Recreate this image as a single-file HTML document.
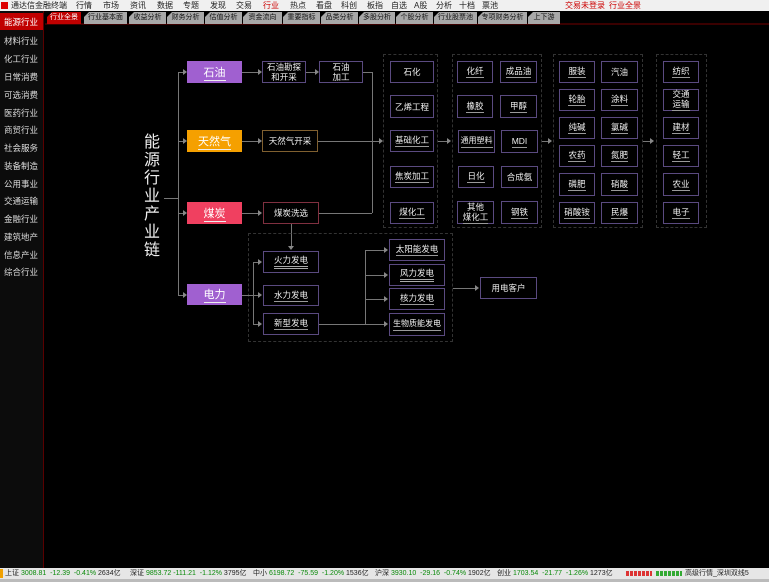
<!DOCTYPE html>
<html><head><meta charset="utf-8"><style>
*{margin:0;padding:0;box-sizing:border-box}
body{width:769px;height:582px;background:#000;position:relative;overflow:hidden;font-family:"Liberation Sans","Noto Sans CJK SC",sans-serif;font-size:9px;color:#ddd}
.a{position:absolute}
.top{left:0;top:0;width:769px;height:11px;background:#f0f0f0;color:#222;font-size:8px;line-height:11px}
.top span{position:absolute;top:0}
.tabs{left:45px;top:11px;width:724px;height:14px;background:#000;border-bottom:2px solid #3a0000}
.tab{position:absolute;top:1px;height:12px;background:#a8a8a8;color:#111;font-size:7px;line-height:12px;text-align:center;white-space:nowrap;overflow:hidden;clip-path:polygon(5px 0,100% 0,100% 100%,0 100%,0 5px)}
.side{left:0;top:11px;width:44px;height:557px;background:#0c0c0c;border-right:1px solid #5a0000}
.si{position:absolute;left:4px;font-size:8.5px;color:#ddd}
.b{position:absolute;border:1px solid #5a4a80;color:#eee;font-size:8.5px;display:flex;align-items:center;justify-content:center;text-align:center;line-height:10px;white-space:nowrap}
.b u{text-decoration:none;border-bottom:1px solid #999;padding-bottom:1px}
.c{position:absolute;color:#fff;font-size:11px;display:flex;align-items:center;justify-content:center}
.c u{text-decoration:none;border-bottom:1px solid #eee}
.g{position:absolute;border:1px dashed #333}
.l{position:absolute;background:#777}
.ar{position:absolute;width:0;height:0;border-top:3px solid transparent;border-bottom:3px solid transparent;border-left:4px solid #888}
.ad{position:absolute;width:0;height:0;border-left:3px solid transparent;border-right:3px solid transparent;border-top:4px solid #888}
.st{left:0;top:568px;width:769px;height:11px;background:#e6e6e6;color:#222;font-size:7px;line-height:11px;white-space:nowrap}
.st span{position:absolute;top:0}
.gr{color:#0a8a0a}
</style></head><body>
<div class="a top">
<span style="left:1px;top:2px;width:7px;height:7px;background:#d00"></span>
<span style="left:11px">通达信金融终端</span>
<span style="left:76px">行情</span><span style="left:103px">市场</span><span style="left:130px">资讯</span><span style="left:157px">数据</span><span style="left:183px">专题</span><span style="left:210px">发现</span><span style="left:236px">交易</span><span style="left:263px;color:#c00">行业</span><span style="left:290px">热点</span><span style="left:316px">看盘</span><span style="left:341px">科创</span><span style="left:367px">板指</span><span style="left:391px">自选</span><span style="left:414px">A股</span><span style="left:436px">分析</span><span style="left:459px">十档</span><span style="left:482px">票池</span>
<span style="left:565px;color:#c00">交易未登录</span><span style="left:609px;color:#c00">行业全景</span>
</div>
<div class="a tabs">
<div class="tab" style="left:2px;width:34px;background:#c00000;color:#fff">行业全景</div>
<div class="tab" style="left:39px;width:43px">行业基本面</div>
<div class="tab" style="left:84px;width:37px">收益分析</div>
<div class="tab" style="left:122px;width:37px">财务分析</div>
<div class="tab" style="left:160px;width:37px">估值分析</div>
<div class="tab" style="left:198px;width:39px">资金流向</div>
<div class="tab" style="left:238px;width:37px">重要指标</div>
<div class="tab" style="left:276px;width:37px">品类分析</div>
<div class="tab" style="left:314px;width:36px">多股分析</div>
<div class="tab" style="left:351px;width:37px">个股分析</div>
<div class="tab" style="left:389px;width:43px">行业股票池</div>
<div class="tab" style="left:433px;width:49px">专项财务分析</div>
<div class="tab" style="left:483px;width:32px">上下游</div>
</div>
<div class="a side">
<div style="position:absolute;left:0;top:2px;width:43px;height:17px;background:#c00000"></div>
<div class="si" style="top:5px;color:#fff">能源行业</div>
<div class="si" style="top:24px">材料行业</div><div class="si" style="top:42px">化工行业</div><div class="si" style="top:60px">日常消费</div><div class="si" style="top:78px">可选消费</div><div class="si" style="top:96px">医药行业</div><div class="si" style="top:113px">商贸行业</div><div class="si" style="top:131px">社会服务</div><div class="si" style="top:149px">装备制造</div><div class="si" style="top:167px">公用事业</div><div class="si" style="top:184px">交通运输</div><div class="si" style="top:202px">金融行业</div><div class="si" style="top:220px">建筑地产</div><div class="si" style="top:238px">信息产业</div><div class="si" style="top:255px">综合行业</div>
</div>

<div class="a" style="left:144px;top:134px;width:18px;font-size:16px;line-height:18px;color:#eee">能源行业产业链</div>
<div class="l" style="left:164px;top:198px;width:14px;height:1px"></div>
<div class="l" style="left:178px;top:72px;width:1px;height:223px"></div>
<div class="l" style="left:178px;top:72px;width:6px;height:1px"></div><div class="ar" style="left:183px;top:69px"></div>
<div class="l" style="left:178px;top:141px;width:6px;height:1px"></div><div class="ar" style="left:183px;top:138px"></div>
<div class="l" style="left:178px;top:213px;width:6px;height:1px"></div><div class="ar" style="left:183px;top:210px"></div>
<div class="l" style="left:178px;top:295px;width:6px;height:1px"></div><div class="ar" style="left:183px;top:292px"></div>

<div class="c" style="left:187px;top:61px;width:55px;height:22px;background:#a060d0"><u>石油</u></div>
<div class="c" style="left:187px;top:130px;width:55px;height:22px;background:#f5a000"><u>天然气</u></div>
<div class="c" style="left:187px;top:202px;width:55px;height:22px;background:#f04060"><u>煤炭</u></div>
<div class="c" style="left:187px;top:284px;width:55px;height:21px;background:#a060d0"><u>电力</u></div>

<div class="l" style="left:242px;top:72px;width:16px;height:1px"></div><div class="ar" style="left:258px;top:69px"></div>
<div class="l" style="left:242px;top:141px;width:16px;height:1px"></div><div class="ar" style="left:258px;top:138px"></div>
<div class="l" style="left:242px;top:213px;width:16px;height:1px"></div><div class="ar" style="left:258px;top:210px"></div>
<div class="b" style="left:262px;top:61px;width:44px;height:22px">石油勘探<br>和开采</div>
<div class="l" style="left:306px;top:72px;width:9px;height:1px"></div><div class="ar" style="left:315px;top:69px"></div>
<div class="b" style="left:319px;top:61px;width:44px;height:22px">石油<br>加工</div>
<div class="b" style="left:262px;top:130px;width:56px;height:22px;border-color:#806030">天然气开采</div>
<div class="b" style="left:263px;top:202px;width:56px;height:22px;border-color:#803040">煤炭洗选</div>
<div class="l" style="left:363px;top:72px;width:9px;height:1px"></div>
<div class="l" style="left:372px;top:72px;width:1px;height:141px"></div>
<div class="l" style="left:319px;top:213px;width:53px;height:1px"></div>
<div class="l" style="left:318px;top:141px;width:61px;height:1px"></div><div class="ar" style="left:379px;top:138px"></div>

<div class="g" style="left:383px;top:54px;width:55px;height:174px"></div>
<div class="b" style="left:390px;top:61px;width:44px;height:22px">石化</div>
<div class="b" style="left:390px;top:95px;width:44px;height:23px">乙烯工程</div>
<div class="b" style="left:390px;top:130px;width:44px;height:22px"><u>基础化工</u></div>
<div class="b" style="left:390px;top:166px;width:44px;height:22px"><u>焦炭加工</u></div>
<div class="b" style="left:390px;top:202px;width:44px;height:22px"><u>煤化工</u></div>
<div class="l" style="left:438px;top:141px;width:10px;height:1px"></div><div class="ar" style="left:447px;top:138px"></div>

<div class="g" style="left:452px;top:54px;width:90px;height:174px"></div>
<div class="b" style="left:457px;top:61px;width:36px;height:22px"><u>化纤</u></div>
<div class="b" style="left:500px;top:61px;width:37px;height:22px"><u>成品油</u></div>
<div class="b" style="left:457px;top:95px;width:36px;height:23px"><u>橡胶</u></div>
<div class="b" style="left:500px;top:95px;width:37px;height:23px"><u>甲醇</u></div>
<div class="b" style="left:458px;top:130px;width:37px;height:23px;font-size:8px"><u>通用塑料</u></div>
<div class="b" style="left:501px;top:130px;width:37px;height:23px"><u>MDI</u></div>
<div class="b" style="left:458px;top:166px;width:36px;height:22px"><u>日化</u></div>
<div class="b" style="left:501px;top:166px;width:37px;height:22px">合成氨</div>
<div class="b" style="left:457px;top:201px;width:37px;height:23px"><u>其他<br>煤化工</u></div>
<div class="b" style="left:501px;top:201px;width:37px;height:23px"><u>钢铁</u></div>
<div class="l" style="left:542px;top:141px;width:7px;height:1px"></div><div class="ar" style="left:548px;top:138px"></div>

<div class="g" style="left:553px;top:54px;width:90px;height:174px"></div>
<div class="b" style="left:559px;top:61px;width:36px;height:22px"><u>服装</u></div>
<div class="b" style="left:601px;top:61px;width:37px;height:22px">汽油</div>
<div class="b" style="left:559px;top:89px;width:36px;height:22px"><u>轮胎</u></div>
<div class="b" style="left:601px;top:89px;width:37px;height:22px"><u>涂料</u></div>
<div class="b" style="left:559px;top:117px;width:36px;height:22px"><u>纯碱</u></div>
<div class="b" style="left:601px;top:117px;width:37px;height:22px"><u>氯碱</u></div>
<div class="b" style="left:559px;top:145px;width:36px;height:22px"><u>农药</u></div>
<div class="b" style="left:601px;top:145px;width:37px;height:22px"><u>氮肥</u></div>
<div class="b" style="left:559px;top:173px;width:36px;height:23px"><u>磷肥</u></div>
<div class="b" style="left:601px;top:173px;width:37px;height:23px"><u>硝酸</u></div>
<div class="b" style="left:559px;top:202px;width:36px;height:22px"><u>硝酸铵</u></div>
<div class="b" style="left:601px;top:202px;width:37px;height:22px"><u>民爆</u></div>
<div class="l" style="left:643px;top:141px;width:8px;height:1px"></div><div class="ar" style="left:650px;top:138px"></div>

<div class="g" style="left:656px;top:54px;width:51px;height:174px"></div>
<div class="b" style="left:663px;top:61px;width:36px;height:22px"><u>纺织</u></div>
<div class="b" style="left:663px;top:89px;width:36px;height:22px"><u>交通<br>运输</u></div>
<div class="b" style="left:663px;top:117px;width:36px;height:22px"><u>建材</u></div>
<div class="b" style="left:663px;top:145px;width:36px;height:22px"><u>轻工</u></div>
<div class="b" style="left:663px;top:173px;width:36px;height:23px"><u>农业</u></div>
<div class="b" style="left:663px;top:202px;width:36px;height:22px"><u>电子</u></div>

<div class="l" style="left:291px;top:224px;width:1px;height:23px"></div><div class="ad" style="left:288px;top:246px"></div>
<div class="g" style="left:248px;top:233px;width:205px;height:109px"></div>
<div class="l" style="left:242px;top:295px;width:16px;height:1px"></div><div class="ar" style="left:258px;top:292px"></div>
<div class="l" style="left:253px;top:262px;width:1px;height:62px"></div>
<div class="l" style="left:253px;top:262px;width:5px;height:1px"></div><div class="ar" style="left:258px;top:259px"></div>
<div class="l" style="left:253px;top:324px;width:5px;height:1px"></div><div class="ar" style="left:258px;top:321px"></div>
<div class="b" style="left:263px;top:251px;width:56px;height:22px"><u style="border-bottom:3px double #aaa">火力发电</u></div>
<div class="b" style="left:263px;top:285px;width:56px;height:21px"><u>水力发电</u></div>
<div class="b" style="left:263px;top:313px;width:56px;height:22px"><u>新型发电</u></div>
<div class="l" style="left:319px;top:324px;width:47px;height:1px"></div>
<div class="l" style="left:365px;top:250px;width:1px;height:75px"></div>
<div class="l" style="left:365px;top:250px;width:20px;height:1px"></div><div class="ar" style="left:384px;top:247px"></div>
<div class="l" style="left:365px;top:275px;width:20px;height:1px"></div><div class="ar" style="left:384px;top:272px"></div>
<div class="l" style="left:365px;top:299px;width:20px;height:1px"></div><div class="ar" style="left:384px;top:296px"></div>
<div class="l" style="left:365px;top:324px;width:20px;height:1px"></div><div class="ar" style="left:384px;top:321px"></div>
<div class="b" style="left:389px;top:239px;width:56px;height:22px"><u>太阳能发电</u></div>
<div class="b" style="left:389px;top:264px;width:56px;height:22px"><u style="border-bottom:3px double #aaa">风力发电</u></div>
<div class="b" style="left:389px;top:288px;width:56px;height:22px"><u>核力发电</u></div>
<div class="b" style="left:389px;top:313px;width:56px;height:23px;font-size:8px"><u>生物质能发电</u></div>
<div class="l" style="left:453px;top:288px;width:22px;height:1px"></div><div class="ar" style="left:475px;top:285px"></div>
<div class="b" style="left:480px;top:277px;width:57px;height:22px">用电客户</div>

<div class="a st">
<span style="left:0;top:1px;width:3px;height:9px;background:#f0a000"></span>
<span style="left:5px">上证 <span class="gr" style="position:static">3008.81 &nbsp;-12.39 &nbsp;-0.41%</span> 2634亿</span>
<span style="left:130px">深证 <span class="gr" style="position:static">9853.72 -111.21 &nbsp;-1.12%</span> 3795亿</span>
<span style="left:253px">中小 <span class="gr" style="position:static">6198.72 &nbsp;-75.59 &nbsp;-1.20%</span> 1536亿</span>
<span style="left:375px">沪深 <span class="gr" style="position:static">3930.10 &nbsp;-29.16 &nbsp;-0.74%</span> 1902亿</span>
<span style="left:497px">创业 <span class="gr" style="position:static">1703.54 &nbsp;-21.77 &nbsp;-1.26%</span> 1273亿</span>
<span style="left:626px;top:3px;width:26px;height:5px;background:repeating-linear-gradient(90deg,#d33 0 3px,transparent 3px 4px)"></span>
<span style="left:656px;top:3px;width:26px;height:5px;background:repeating-linear-gradient(90deg,#3a3 0 3px,transparent 3px 4px)"></span>
<span style="left:685px">高级行情_深圳双线5</span>
</div>
<div class="a" style="left:0;top:579px;width:769px;height:3px;background:#bbb"></div>
</body></html>
